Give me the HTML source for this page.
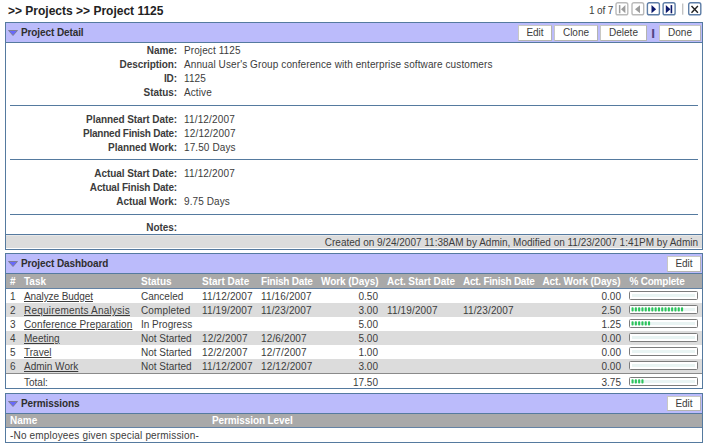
<!DOCTYPE html>
<html>
<head>
<meta charset="utf-8">
<title>Project 1125</title>
<style>
html,body{margin:0;padding:0;background:#fff;}
body{width:707px;height:448px;position:relative;overflow:hidden;font-family:"Liberation Sans",Arial,sans-serif;font-size:10px;line-height:14px;color:#3c3c3c;}
.abs{position:absolute;white-space:nowrap;}
.title{left:8px;top:4px;font-size:12px;line-height:15px;font-weight:bold;color:#222;}
.panel{position:absolute;left:5px;width:696px;border:1px solid #557a9f;background:#fff;box-sizing:content-box;}
.phead{position:absolute;left:0;top:0;right:0;height:19px;background:#bbbbfb;border-bottom:1px solid #557a9f;}
.phead .tri{position:absolute;left:1.5px;top:7px;}
.phead .ht{letter-spacing:-0.1px;position:absolute;left:15px;top:3px;font-weight:bold;color:#2e2e2e;white-space:nowrap;}
.btn{position:absolute;top:2px;height:14px;line-height:14px;border:1px solid #c8c8c4;border-right-color:#b4b4b0;border-bottom-color:#b4b4b0;background:#fff;color:#3c3c3c;text-align:center;font-size:10px;box-sizing:content-box;}
.lbl{position:absolute;right:525px;letter-spacing:-0.07px;font-weight:bold;white-space:nowrap;color:#3c3c3c;}
.val{position:absolute;left:178px;letter-spacing:0.1px;white-space:nowrap;color:#3c3c3c;}
.hr{position:absolute;left:4px;width:688px;height:1px;background:#557a9f;}
.foot{position:absolute;left:0;right:0;height:13px;background:#dcdcdc;border-top:1px solid #557a9f;text-align:right;box-shadow:inset 0 1px 0 #e8e8e8;}
.foot span{position:absolute;right:4px;top:1px;line-height:13px;white-space:nowrap;}
.thead{position:absolute;left:0;right:0;height:14px;background:#a9a9a9;color:#fff;font-weight:bold;border-bottom:1px solid #6482a4;}
.row{position:absolute;left:0;right:0;height:14px;}
.row.alt{background:#dcdcdc;}
.row span{position:absolute;top:1px;white-space:nowrap;}
.row.tot span{top:2px;}
.row.tot .pb{top:3px;}
.thead span{position:absolute;top:1px;white-space:nowrap;}
.d{letter-spacing:0.14px;}
.r{text-align:right;}
a{color:#3c3c3c;text-decoration:underline;}
.nav{position:absolute;top:2px;width:11px;height:11px;border:1px solid #5a7ca3;border-radius:2px;background:#fff;box-sizing:content-box;}
.nav.dis{border-color:#b5b5b5;}
.nav svg{position:absolute;left:0;top:0;}
.pb{position:absolute;left:623px;top:2px;width:67px;height:7px;border:1px solid #7c7c7c;border-radius:1.5px;background:#fff linear-gradient(#e9f4f3,#e9f4f3) no-repeat 2px 2px / 63px 3px;box-sizing:content-box;}
.pb svg{position:absolute;left:0;top:0;}
</style>
</head>
<body>
<div class="abs title">&gt;&gt; Projects &gt;&gt; Project 1125</div>

<div class="abs" style="left:589px;top:4px;color:#3c3c3c;letter-spacing:-0.15px;">1 of 7</div>
<svg class="abs" style="left:612px;top:0;" width="95" height="18" viewBox="0 0 95 18"><rect x="4.0" y="2.8" width="11.8" height="12.0" rx="1.9" fill="#fff" stroke="#bababa" stroke-width="1.4"/><rect x="6.9" y="5.1" width="1.5" height="8.2" fill="#9c9c9c"/><path d="M9.0 9.2 L13.4 5.1 L13.4 13.3 Z" fill="#9c9c9c"/><rect x="20.0" y="2.8" width="11.7" height="12.0" rx="1.9" fill="#fff" stroke="#bababa" stroke-width="1.4"/><path d="M23.0 9.2 L28.0 5.2 L28.0 13.2 Z" fill="#9c9c9c"/><rect x="35.4" y="2.8" width="12.0" height="12.0" rx="1.9" fill="#fff" stroke="#5d7da6" stroke-width="1.4"/><path d="M44.1 9.2 L39.5 5.1 L39.5 13.3 Z" fill="#0c1a6c"/><rect x="51.1" y="2.8" width="12.0" height="12.0" rx="1.9" fill="#fff" stroke="#5d7da6" stroke-width="1.4"/><path d="M58.4 9.2 L53.8 5.1 L53.8 13.3 Z" fill="#0c1a6c"/><rect x="58.6" y="5.1" width="1.6" height="8.2" fill="#0c1a6c"/><rect x="70.2" y="3.5" width="1.1" height="11.2" fill="#b4b4b4"/><rect x="76.7" y="2.8" width="12.1" height="12.0" rx="1.9" fill="#fff" stroke="#5d7da6" stroke-width="1.4"/><path d="M79.5 5.9 L85.9 12.8 M85.9 5.9 L79.5 12.8" stroke="#222" stroke-width="1.4" fill="none"/></svg>

<!-- Panel 1 : Project Detail -->
<div class="panel" style="top:22px;height:226px;">
  <div class="phead">
    <svg class="tri" width="11" height="7" viewBox="0 0 11 7"><path d="M0.5 0.5 L9.5 0.5 L5 5.5 Z" fill="#6868fc" stroke="#7c7c8c" stroke-width="0.9"/></svg>
    <div class="ht">Project Detail</div>
    <div class="btn" style="left:512px;width:32px;">Edit</div>
    <div class="btn" style="left:548px;width:42px;">Clone</div>
    <div class="btn" style="left:594px;width:45px;">Delete</div>
    <div class="abs" style="left:645.6px;top:3px;color:#4a3e80;font-weight:bold;font-size:9px;text-shadow:0.7px 0 0 #4a3e80;">|</div>
    <div class="btn" style="left:653px;width:40px;">Done</div>
  </div>
  <div class="lbl" style="top:21px;">Name:</div><div class="val" style="top:21px;">Project 1125</div>
  <div class="lbl" style="top:35px;">Description:</div><div class="val" style="top:35px;">Annual User's Group conference with enterprise software customers</div>
  <div class="lbl" style="top:49px;">ID:</div><div class="val" style="top:49px;">1125</div>
  <div class="lbl" style="top:63px;">Status:</div><div class="val" style="top:63px;">Active</div>
  <div class="hr" style="top:82px;"></div>
  <div class="lbl" style="top:90px;">Planned Start Date:</div><div class="val" style="top:90px;letter-spacing:0.16px;">11/12/2007</div>
  <div class="lbl" style="top:104px;letter-spacing:-0.25px;">Planned Finish Date:</div><div class="val" style="top:104px;letter-spacing:0.16px;">12/12/2007</div>
  <div class="lbl" style="top:118px;">Planned Work:</div><div class="val" style="top:118px;">17.50 Days</div>
  <div class="hr" style="top:136px;"></div>
  <div class="lbl" style="top:144px;">Actual Start Date:</div><div class="val" style="top:144px;letter-spacing:0.16px;">11/12/2007</div>
  <div class="lbl" style="top:158px;letter-spacing:-0.18px;">Actual Finish Date:</div>
  <div class="lbl" style="top:172px;">Actual Work:</div><div class="val" style="top:172px;">9.75 Days</div>
  <div class="hr" style="top:191px;"></div>
  <div class="lbl" style="top:198px;">Notes:</div>
  <div class="foot" style="top:211px;"><span>Created on 9/24/2007 11:38AM by Admin, Modified on 11/23/2007 1:41PM by Admin</span></div>
</div>

<!-- Panel 2 : Project Dashboard -->
<div class="panel" style="top:253px;height:134px;">
  <div class="phead">
    <svg class="tri" width="11" height="7" viewBox="0 0 11 7"><path d="M0.5 0.5 L9.5 0.5 L5 5.5 Z" fill="#6868fc" stroke="#7c7c8c" stroke-width="0.9"/></svg>
    <div class="ht">Project Dashboard</div>
    <div class="btn" style="left:661px;width:32px;">Edit</div>
  </div>
  <div class="thead" style="top:20px;">
    <span style="left:4px;">#</span><span style="left:18px;">Task</span><span style="left:135px;">Status</span><span style="left:196px;">Start Date</span><span style="left:255px;letter-spacing:-0.2px;">Finish Date</span><span style="left:315px;letter-spacing:-0.06px;">Work (Days)</span><span style="left:381px;letter-spacing:-0.06px;">Act. Start Date</span><span style="left:457px;letter-spacing:-0.25px;">Act. Finish Date</span><span style="left:536.5px;letter-spacing:-0.12px;">Act. Work (Days)</span><span style="left:623.5px;letter-spacing:-0.22px;">% Complete</span>
  </div>
  <div class="row" style="top:35px;"><span style="left:4px;">1</span><span style="left:18px;"><a style="letter-spacing:-0.08px;">Analyze Budget</a></span><span style="left:135px;">Canceled</span><span class="d" style="left:196px;">11/12/2007</span><span class="d" style="left:255px;">11/16/2007</span><span class="r" style="right:324px;">0.50</span><span class="r" style="right:81px;">0.00</span><div class="pb"></div></div>
  <div class="row alt" style="top:49px;"><span style="left:4px;">2</span><span style="left:18px;"><a style="letter-spacing:0.2px;">Requirements Analysis</a></span><span style="left:135px;letter-spacing:0.12px;">Completed</span><span class="d" style="left:196px;">11/19/2007</span><span class="d" style="left:255px;">11/23/2007</span><span class="r" style="right:324px;">3.00</span><span class="d" style="left:381px;">11/19/2007</span><span class="d" style="left:457px;">11/23/2007</span><span class="r" style="right:81px;">2.50</span><div class="pb"><svg width="67" height="7" viewBox="0 0 67 7"><g fill="#2cc45c"><rect x="1.5" y="1.3" width="2.1" height="4.2" rx="0.8"/><rect x="4.8" y="1.3" width="2.1" height="4.2" rx="0.8"/><rect x="8.1" y="1.3" width="2.1" height="4.2" rx="0.8"/><rect x="11.4" y="1.3" width="2.1" height="4.2" rx="0.8"/><rect x="14.7" y="1.3" width="2.1" height="4.2" rx="0.8"/><rect x="18" y="1.3" width="2.1" height="4.2" rx="0.8"/><rect x="21.3" y="1.3" width="2.1" height="4.2" rx="0.8"/><rect x="24.6" y="1.3" width="2.1" height="4.2" rx="0.8"/><rect x="27.9" y="1.3" width="2.1" height="4.2" rx="0.8"/><rect x="31.2" y="1.3" width="2.1" height="4.2" rx="0.8"/><rect x="34.5" y="1.3" width="2.1" height="4.2" rx="0.8"/><rect x="37.8" y="1.3" width="2.1" height="4.2" rx="0.8"/><rect x="41.1" y="1.3" width="2.1" height="4.2" rx="0.8"/><rect x="44.4" y="1.3" width="2.1" height="4.2" rx="0.8"/><rect x="47.7" y="1.3" width="2.1" height="4.2" rx="0.8"/><rect x="51" y="1.3" width="2.1" height="4.2" rx="0.8"/></g></svg></div></div>
  <div class="row" style="top:63px;"><span style="left:4px;">3</span><span style="left:18px;"><a style="letter-spacing:0.1px;">Conference Preparation</a></span><span style="left:135px;">In Progress</span><span class="r" style="right:324px;">5.00</span><span class="r" style="right:81px;">1.25</span><div class="pb"><svg width="67" height="7" viewBox="0 0 67 7"><g fill="#2cc45c"><rect x="1.5" y="1.3" width="2.1" height="4.2" rx="0.8"/><rect x="4.8" y="1.3" width="2.1" height="4.2" rx="0.8"/><rect x="8.1" y="1.3" width="2.1" height="4.2" rx="0.8"/><rect x="11.4" y="1.3" width="2.1" height="4.2" rx="0.8"/><rect x="14.7" y="1.3" width="2.1" height="4.2" rx="0.8"/><rect x="18" y="1.3" width="2.1" height="4.2" rx="0.8"/></g></svg></div></div>
  <div class="row alt" style="top:77px;"><span style="left:4px;">4</span><span style="left:18px;"><a>Meeting</a></span><span style="left:135px;">Not Started</span><span class="d" style="left:196px;">12/2/2007</span><span class="d" style="left:255px;">12/6/2007</span><span class="r" style="right:324px;">5.00</span><span class="r" style="right:81px;">0.00</span><div class="pb"></div></div>
  <div class="row" style="top:91px;"><span style="left:4px;">5</span><span style="left:18px;"><a>Travel</a></span><span style="left:135px;">Not Started</span><span class="d" style="left:196px;">12/2/2007</span><span class="d" style="left:255px;">12/7/2007</span><span class="r" style="right:324px;">1.00</span><span class="r" style="right:81px;">0.00</span><div class="pb"></div></div>
  <div class="row alt" style="top:105px;"><span style="left:4px;">6</span><span style="left:18px;"><a>Admin Work</a></span><span style="left:135px;">Not Started</span><span class="d" style="left:196px;">11/12/2007</span><span class="d" style="left:255px;">12/12/2007</span><span class="r" style="right:324px;">3.00</span><span class="r" style="right:81px;">0.00</span><div class="pb"></div></div>
  <div class="abs" style="left:0;right:0;top:119px;height:1px;background:#8a8a8a;"></div>
  <div class="row tot" style="top:120px;"><span style="left:18px;">Total:</span><span class="r" style="right:324px;">17.50</span><span class="r" style="right:81px;">3.75</span><div class="pb"><svg width="67" height="7" viewBox="0 0 67 7"><g fill="#2cc45c"><rect x="1.5" y="1.3" width="2.1" height="4.2" rx="0.8"/><rect x="4.8" y="1.3" width="2.1" height="4.2" rx="0.8"/><rect x="8.1" y="1.3" width="2.1" height="4.2" rx="0.8"/><rect x="11.4" y="1.3" width="2.1" height="4.2" rx="0.8"/></g></svg></div></div>
</div>

<!-- Panel 3 : Permissions -->
<div class="panel" style="top:393px;height:48px;">
  <div class="phead">
    <svg class="tri" width="11" height="7" viewBox="0 0 11 7"><path d="M0.5 0.5 L9.5 0.5 L5 5.5 Z" fill="#6868fc" stroke="#7c7c8c" stroke-width="0.9"/></svg>
    <div class="ht">Permissions</div>
    <div class="btn" style="left:661px;width:32px;height:13px;line-height:13px;">Edit</div>
  </div>
  <div class="thead" style="top:20px;height:13px;"><span style="left:4px;top:0;">Name</span><span style="left:206px;top:0;letter-spacing:-0.1px;">Permission Level</span></div>
  <div class="row" style="top:34px;"><span style="left:4px;letter-spacing:0.17px;">-No employees given special permission-</span></div>
</div>
</body>
</html>
